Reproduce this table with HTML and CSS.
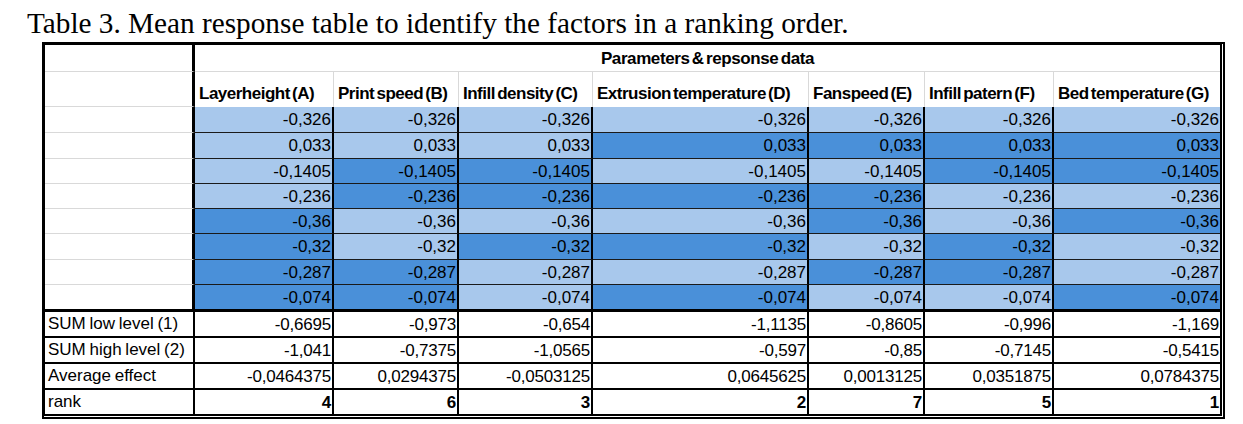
FILE: index.html
```html
<!DOCTYPE html>
<html lang="en">
<head>
<meta charset="utf-8">
<title>Table 3</title>
<link rel="stylesheet" href="styles.css">
</head>
<body>
<p class="caption">Table 3. Mean response table to identify the factors in a ranking order.</p>
<div class="sheet">
  <div class="c lab hd1"></div>
  <div class="c span hd1 title">Parameters &amp; repsonse data</div>

  <div class="c lab hd2"></div>
  <div class="c hd2 h">Layerheight (A)</div>
  <div class="c hd2 h">Print speed (B)</div>
  <div class="c hd2 h">Infill density (C)</div>
  <div class="c hd2 h">Extrusion temperature (D)</div>
  <div class="c hd2 h">Fanspeed (E)</div>
  <div class="c hd2 h">Infill patern (F)</div>
  <div class="c hd2 h last">Bed temperature (G)</div>

  <div class="c lab dr"></div>
  <div class="c v lt">-0,326</div><div class="c v lt">-0,326</div><div class="c v lt">-0,326</div><div class="c v lt">-0,326</div><div class="c v lt">-0,326</div><div class="c v lt">-0,326</div><div class="c v lt last">-0,326</div>

  <div class="c lab dr"></div>
  <div class="c v lt">0,033</div><div class="c v lt">0,033</div><div class="c v lt">0,033</div><div class="c v dk">0,033</div><div class="c v dk">0,033</div><div class="c v dk">0,033</div><div class="c v dk last">0,033</div>

  <div class="c lab dr"></div>
  <div class="c v lt">-0,1405</div><div class="c v dk">-0,1405</div><div class="c v dk">-0,1405</div><div class="c v lt">-0,1405</div><div class="c v lt">-0,1405</div><div class="c v dk">-0,1405</div><div class="c v dk last">-0,1405</div>

  <div class="c lab dr"></div>
  <div class="c v lt">-0,236</div><div class="c v dk">-0,236</div><div class="c v dk">-0,236</div><div class="c v dk">-0,236</div><div class="c v dk">-0,236</div><div class="c v lt">-0,236</div><div class="c v lt last">-0,236</div>

  <div class="c lab dr"></div>
  <div class="c v dk">-0,36</div><div class="c v lt">-0,36</div><div class="c v lt">-0,36</div><div class="c v lt">-0,36</div><div class="c v dk">-0,36</div><div class="c v lt">-0,36</div><div class="c v dk last">-0,36</div>

  <div class="c lab dr"></div>
  <div class="c v dk">-0,32</div><div class="c v lt">-0,32</div><div class="c v dk">-0,32</div><div class="c v dk">-0,32</div><div class="c v lt">-0,32</div><div class="c v dk">-0,32</div><div class="c v lt last">-0,32</div>

  <div class="c lab dr"></div>
  <div class="c v dk">-0,287</div><div class="c v dk">-0,287</div><div class="c v lt">-0,287</div><div class="c v lt">-0,287</div><div class="c v dk">-0,287</div><div class="c v dk">-0,287</div><div class="c v lt last">-0,287</div>

  <div class="c lab dr sep"></div>
  <div class="c v dk sep">-0,074</div><div class="c v dk sep">-0,074</div><div class="c v lt sep">-0,074</div><div class="c v dk sep">-0,074</div><div class="c v lt sep">-0,074</div><div class="c v lt sep">-0,074</div><div class="c v dk sep last">-0,074</div>

  <div class="c lab sm">SUM low level (1)</div>
  <div class="c v sm">-0,6695</div><div class="c v sm">-0,973</div><div class="c v sm">-0,654</div><div class="c v sm">-1,1135</div><div class="c v sm">-0,8605</div><div class="c v sm">-0,996</div><div class="c v sm last">-1,169</div>

  <div class="c lab sm">SUM high level (2)</div>
  <div class="c v sm">-1,041</div><div class="c v sm">-0,7375</div><div class="c v sm">-1,0565</div><div class="c v sm">-0,597</div><div class="c v sm">-0,85</div><div class="c v sm">-0,7145</div><div class="c v sm last">-0,5415</div>

  <div class="c lab sm">Average effect</div>
  <div class="c v sm">-0,0464375</div><div class="c v sm">0,0294375</div><div class="c v sm">-0,0503125</div><div class="c v sm">0,0645625</div><div class="c v sm">0,0013125</div><div class="c v sm">0,0351875</div><div class="c v sm last">0,0784375</div>

  <div class="c lab sm end">rank</div>
  <div class="c v sm end b">4</div><div class="c v sm end b">6</div><div class="c v sm end b">3</div><div class="c v sm end b">2</div><div class="c v sm end b">7</div><div class="c v sm end b">5</div><div class="c v sm end b last">1</div>
</div>
</body>
</html>
```

FILE: styles.css
```css
html, body {
  margin: 0;
  padding: 0;
  background: #ffffff;
}

.caption {
  margin: 9px 0 0 27px;
  font-family: "Liberation Serif", "Times New Roman", serif;
  font-size: 29.25px;
  line-height: 29px;
  color: #000;
  height: 30px;
}

.sheet {
  margin: 3px 0 0 42px;
  width: 1183px;
  box-sizing: border-box;
  display: grid;
  grid-template-columns: 150px 139px 125px 134px 216px 116px 129px 166px;
  grid-template-rows: 27px 35px 26px 26px 25px 25px 25px 26px 25px 27px 26px 26px 26px 24px;
  border-left: 3px solid #000;
  border-top: 3px solid #000;
  border-right: 5px double #000;
  border-bottom: 5px double #000;
  font-family: "Liberation Sans", Arial, sans-serif;
  font-size: 17px;
  color: #000;
}

.c {
  box-sizing: border-box;
  display: flex;
  align-items: center;
  white-space: nowrap;
  overflow: hidden;
  border-right: 2px solid #000;
  border-bottom: 1px solid #1a1a1a;
}

.c.last {
  border-right: none;
}

.lab {
  border-right: 3px solid #000;
  border-bottom: 1px solid #d9d9d9;
  padding-left: 3px;
}

.hd1 {
  border-bottom: 1px solid #d9d9d9;
}

.span {
  grid-column: 2 / span 7;
  border-right: none;
}

.title {
  justify-content: center;
  font-weight: bold;
  letter-spacing: -0.4px;
  word-spacing: -2px;
  padding-top: 1px;
}

.hd2 {
  border-bottom: none;
}

.lab.hd2 {
  border-bottom: 1px solid #d9d9d9;
}

.h {
  border-right: 1px solid #d9d9d9;
  align-items: flex-end;
  padding: 0 0 3px 4px;
  font-weight: bold;
  letter-spacing: -0.5px;
  word-spacing: -2px;
}

.h.last {
  border-right: none;
}

.v {
  justify-content: flex-end;
  padding-right: 1px;
  padding-top: 1px;
}

.lt {
  background: #a8c8ec;
}

.dk {
  background: #4a90d9;
}

.sep {
  border-bottom: 3px solid #000;
}

.lab.sep {
  border-bottom: 3px solid #000;
}

.sm {
  border-bottom: 2px solid #000;
  letter-spacing: -0.2px;
}

.lab.sm {
  border-right: 2px solid #000;
  padding-left: 3px;
  letter-spacing: 0;
  word-spacing: -1px;
}

.end {
  border-bottom: none;
}

.b {
  font-weight: bold;
}
```
